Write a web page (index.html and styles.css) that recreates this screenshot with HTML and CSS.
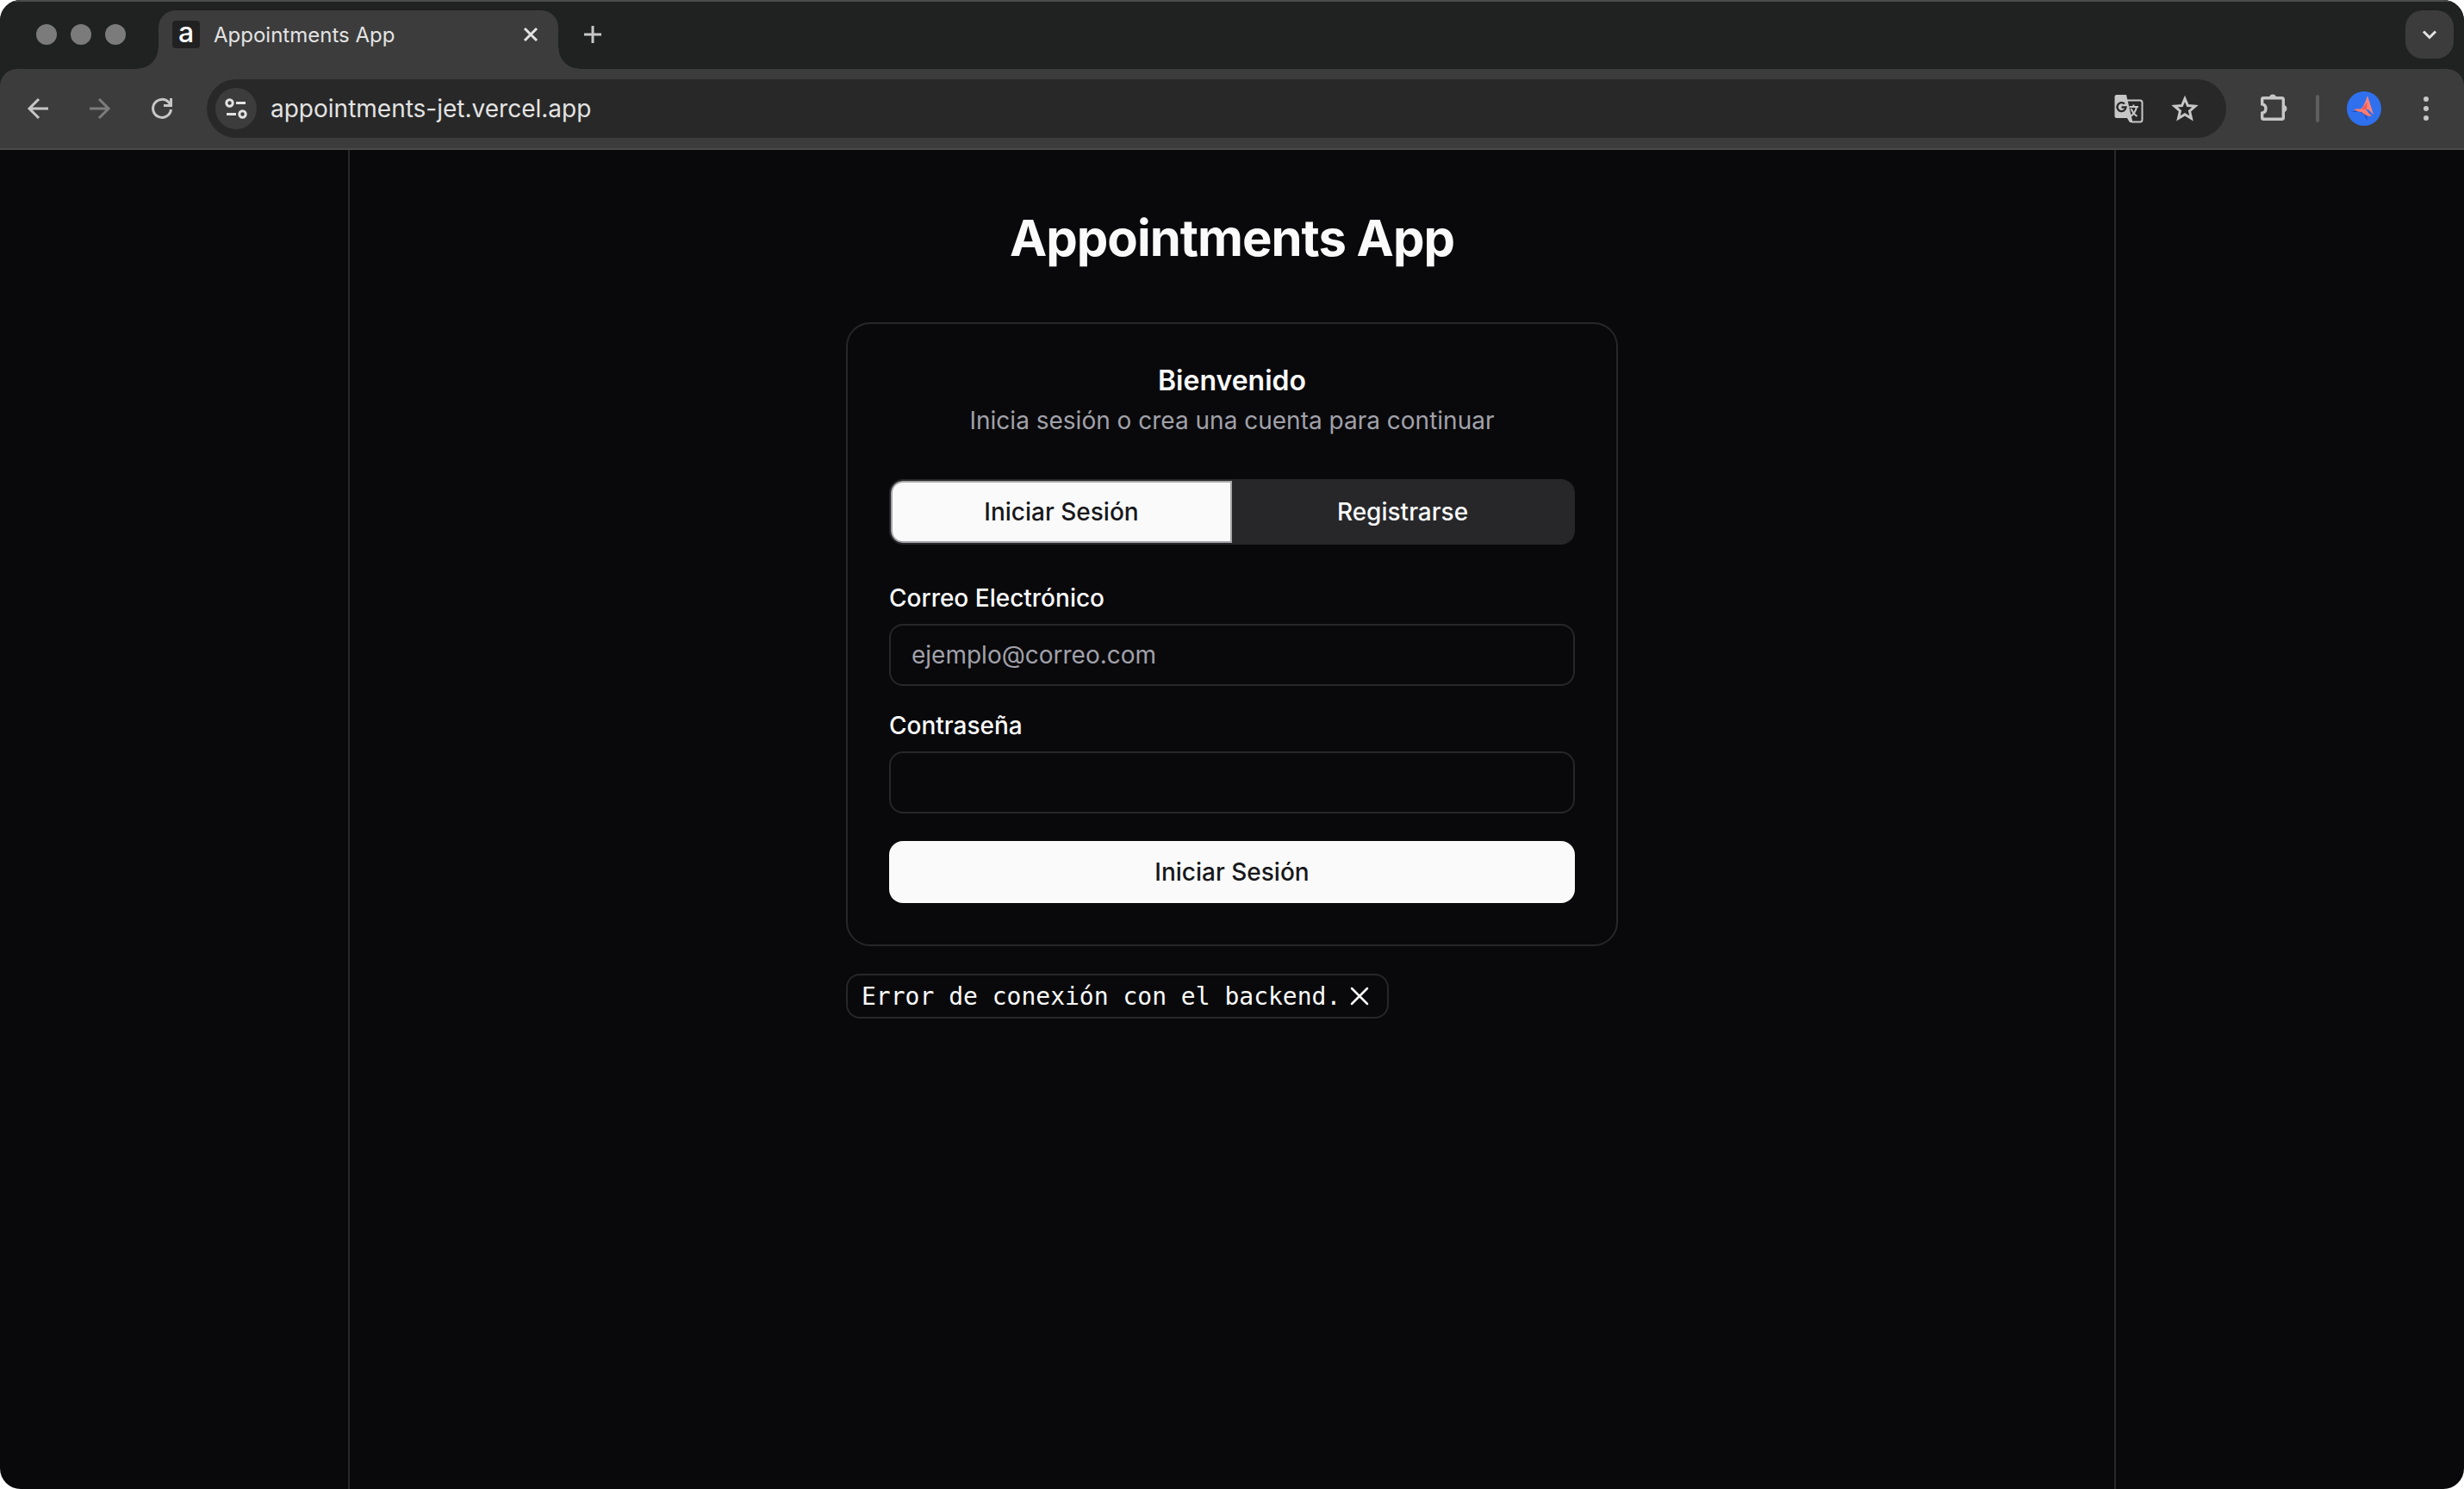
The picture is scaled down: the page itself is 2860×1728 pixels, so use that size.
FILE: index.html
```html
<!DOCTYPE html>
<html lang="es">
<head>
<meta charset="utf-8">
<title>Appointments App</title>
<link rel="stylesheet" href="styles.css">
</head>
<body>
<div class="window">
  <div class="chrome">
    <header class="tabstrip">
      <div class="lights"><span class="light"></span><span class="light"></span><span class="light"></span></div>
      <div class="tab">
        <span class="favicon">a</span>
        <span class="tab-title">Appointments App</span>
        <button class="icon-btn" aria-label="Cerrar pestaña">
          <svg width="24" height="24" viewBox="0 0 24 24"><path d="M5 5l14 14M19 5L5 19" fill="none" stroke="#e3e3e3" stroke-width="3"/></svg>
        </button>
      </div>
      <button class="icon-btn new-tab" aria-label="Nueva pestaña">
        <svg width="24" height="24" viewBox="0 0 24 24"><path d="M12 2v20M2 12h20" fill="none" stroke="#c7c7c7" stroke-width="3"/></svg>
      </button>
      <button class="icon-btn tab-search" aria-label="Buscar pestañas">
        <svg width="24" height="24" viewBox="0 0 24 24"><path d="M5 8.500l7 7 7-7" fill="none" stroke="#e3e3e3" stroke-width="3"/></svg>
      </button>
    </header>

    <nav class="toolbar">
      <button class="icon-btn" aria-label="Atrás">
        <svg width="32" height="32" viewBox="0 0 32 32"><path d="M28 16H6M17 5L6 16l11 11" fill="none" stroke="#c7c7c7" stroke-width="3"/></svg>
      </button>
      <button class="icon-btn" aria-label="Adelante">
        <svg width="32" height="32" viewBox="0 0 32 32"><path d="M4 16h22M15 5l11 11-11 11" fill="none" stroke="#7c7c7c" stroke-width="3"/></svg>
      </button>
      <button class="icon-btn" aria-label="Recargar">
        <svg width="32" height="32" viewBox="0 0 32 32"><path d="M26.500 17a10.500 10.500 0 1 1-2.500-8l2 2.500" fill="none" stroke="#c7c7c7" stroke-width="3"/><path d="M28 4v10H18v-3h7V4z" fill="#c7c7c7"/></svg>
      </button>
      <div class="omnibox">
        <button class="icon-btn site-info" aria-label="Información del sitio">
          <svg width="32" height="32" viewBox="0 0 32 32" fill="none" stroke="#e3e3e3" stroke-width="3"><circle cx="8.500" cy="9.500" r="3.700"/><path d="M16 9.500h11M5 22.500h11"/><circle cx="23.500" cy="22.500" r="3.700"/></svg>
        </button>
        <input class="url" type="text" value="appointments-jet.vercel.app" aria-label="Dirección">
        <button class="icon-btn" aria-label="Traducir">
          <svg width="34" height="34" viewBox="0 0 34 34"><path d="M15 7.500h15a2.500 2.500 0 0 1 2.500 2.500v20a2.500 2.500 0 0 1-2.500 2.500H20" fill="none" stroke="#c7c7c7" stroke-width="2"/><path d="M3 1h11l7.500 32H18l-3-5H3a2.500 2.500 0 0 1-2.500-2.500v-22A2.500 2.500 0 0 1 3 1z" fill="#c7c7c7"/><path d="M12 11.500a5 5 0 1 0 1.500 4H8.500" fill="none" stroke="#282828" stroke-width="2.400"/><path d="M17.500 15H28M22.500 12.500V15M26 15c-1 5-4 9-7 11M19.500 17c1.500 4 4 7 7 9" fill="none" stroke="#c7c7c7" stroke-width="2"/></svg>
        </button>
        <button class="icon-btn" aria-label="Añadir a marcadores">
          <svg width="32" height="32" viewBox="0 0 32 32"><path d="M16 4.500l3.400 8 8.600.7-6.500 5.700 2 8.500-7.500-4.600-7.500 4.600 2-8.500L4 13.200l8.600-.7z" fill="none" stroke="#c7c7c7" stroke-width="3"/></svg>
        </button>
      </div>
      <button class="icon-btn" aria-label="Extensiones">
        <svg width="36" height="36" viewBox="0 0 36 36"><path d="M7 5.700h22a1.300 1.300 0 0 1 1.300 1.300v22a1.300 1.300 0 0 1-1.300 1.300H7A1.300 1.300 0 0 1 5.700 29v-5.800a5.300 5.300 0 0 0 0-10.400V7A1.300 1.300 0 0 1 7 5.700z" fill="none" stroke="#c7c7c7" stroke-width="3.400"/><path d="M14 4.500a4.200 4.200 0 0 1 8 0zM31.500 14a4.200 4.200 0 0 1 0 8z" fill="#c7c7c7"/></svg>
      </button>
      <span class="divider"></span>
      <button class="icon-btn profile" aria-label="Perfil">
        <svg width="40" height="40" viewBox="0 0 40 40"><circle cx="20" cy="20" r="20" fill="#2f70ee"/><path d="M5 24l6-2 8 4 5 8-1-8 5 4-2-6z" fill="#2450bd"/><path d="M24 5l7 22-6-6-9 0c4-4 6-10 8-16z" fill="#ff8478"/><path d="M8 21c5-1 10-1 14 0l7 8c-5 0-9-2-12-5-3 0-6-1-9-3z" fill="#fb7b70"/><path d="M24 12l-1 9-6 0z" fill="#ef5a55"/></svg>
      </button>
      <button class="icon-btn" aria-label="Menú">
        <svg width="32" height="32" viewBox="0 0 32 32" fill="#c7c7c7"><circle cx="16" cy="5" r="3"/><circle cx="16" cy="16" r="3"/><circle cx="16" cy="27" r="3"/></svg>
      </button>
    </nav>
  </div>

  <main class="page">
    <div class="column">
      <h1 class="title">Appointments App</h1>
      <div class="stack">
        <section class="card">
          <h2 class="card-title">Bienvenido</h2>
          <p class="card-text">Inicia sesión o crea una cuenta para continuar</p>
          <div class="switch">
            <button class="switch-item active">Iniciar Sesión</button>
            <button class="switch-item">Registrarse</button>
          </div>
          <form class="form">
            <label class="label" for="email">Correo Electrónico</label>
            <input class="field" id="email" type="email" placeholder="ejemplo@correo.com">
            <label class="label" for="password">Contraseña</label>
            <input class="field" id="password" type="password">
            <button class="submit" type="button">Iniciar Sesión</button>
          </form>
        </section>
        <div class="toast" role="alert">
          <span>Error de conexión con el backend.</span>
          <button class="icon-btn" aria-label="Cerrar aviso">
            <svg width="32" height="32" viewBox="0 0 32 32"><path d="M7 7l18 18M25 7L7 25" fill="none" stroke="#fafafa" stroke-width="2.500" stroke-linecap="round"/></svg>
          </button>
        </div>
      </div>
    </div>
  </main>
</div>
</body>
</html>
```
FILE: styles.css
```css
* { box-sizing: border-box; }
body {
  margin: 0;
  background: #fff;
  color: #fafafa;
  font-family: Inter, "Liberation Sans", sans-serif;
  font-size: 28px;
}
button, input { font: inherit; color: inherit; }
svg { display: block; }

.window {
  display: flex;
  flex-direction: column;
  min-height: 100vh;
  border-radius: 24px;
  overflow: hidden;
  background: #09090b;
}
.chrome { background: #202221; }
.icon-btn {
  display: flex;
  flex: none;
  align-items: center;
  justify-content: center;
  padding: 0;
  border: 0;
  background: none;
}

/* Tab strip */
.tabstrip {
  display: flex;
  align-items: center;
  height: 80px;
  padding: 0 12px 0 42px;
  box-shadow: inset 0 2px #4b4d4c;
}
.lights { display: flex; gap: 16px; }
.light {
  width: 24px;
  height: 24px;
  border-radius: 50%;
  background: #7b7b7b;
}
.tab {
  position: relative;
  display: flex;
  align-self: flex-end;
  align-items: center;
  gap: 16px;
  width: 464px;
  height: 68px;
  margin-left: 38px;
  padding: 0 20px 12px 16px;
  border-radius: 20px 20px 0 0;
  background: #3c3c3c;
}
.tab::before, .tab::after {
  content: "";
  position: absolute;
  bottom: 0;
  width: 24px;
  height: 24px;
}
.tab::before {
  right: 100%;
  background: radial-gradient(circle at 0 0, transparent 23px, #3c3c3c 24px);
}
.tab::after {
  left: 100%;
  background: radial-gradient(circle at 100% 0, transparent 23px, #3c3c3c 24px);
}
.favicon {
  width: 32px;
  height: 32px;
  border-radius: 4px;
  background: #212121;
  color: #fff;
  font-size: 32px;
  font-weight: 500;
  line-height: 28px;
  text-align: center;
}
.tab-title {
  flex: 1;
  color: #e3e3e3;
  font-size: 24px;
}
.new-tab { margin-left: 28px; }
.tab-search {
  width: 56px;
  height: 56px;
  margin-left: auto;
  border-radius: 20px;
  background: #3c3c3c;
}

/* Toolbar */
.toolbar {
  display: flex;
  align-items: center;
  gap: 40px;
  height: 94px;
  padding: 0 28px;
  border-bottom: 2px solid #4a4a4a;
  border-radius: 20px 20px 0 0;
  background: #3c3c3c;
}
.omnibox {
  display: flex;
  flex: 1;
  align-items: center;
  gap: 32px;
  height: 68px;
  margin: 0 -4px;
  padding: 0 32px 0 10px;
  border-radius: 34px;
  background: #282828;
}
.site-info {
  width: 48px;
  height: 48px;
  border-radius: 50%;
  background: #3c3c3c;
}
.url {
  flex: 1;
  margin-left: -16px;
  padding: 0;
  border: 0;
  outline: 0;
  background: none;
  color: #e3e3e3;
}
.divider {
  width: 4px;
  height: 32px;
  margin: 0 -8px;
  border-radius: 2px;
  background: #5f5f5f;
}
.profile { margin-right: -4px; }

/* Page */
.page {
  flex: 1;
  display: flex;
  padding: 0 404px;
}
.column {
  flex: 1;
  padding: 72px 0 64px;
  border: solid #27272a;
  border-width: 0 2px;
}
.title {
  margin: 0;
  font-size: 58px;
  font-weight: 700;
  line-height: 60px;
  letter-spacing: -1px;
  text-align: center;
}
.stack {
  max-width: 896px;
  margin: 68px auto 0;
}
.card {
  padding: 48px;
  border: 2px solid #27272a;
  border-radius: 28px;
}
.card-title {
  margin: 0;
  font-size: 32px;
  font-weight: 600;
  line-height: 36px;
  text-align: center;
}
.card-text {
  margin: 8px 0 48px;
  color: #a1a1aa;
  line-height: 40px;
  text-align: center;
}
.switch {
  display: grid;
  grid-template-columns: 1fr 1fr;
  height: 76px;
  border: 2px solid #27272a;
  border-radius: 16px;
  overflow: hidden;
  background: #27272a;
}
.switch-item {
  border: 0;
  background: #27272a;
  font-weight: 500;
}
.active {
  border: 2px solid #a7a7a9;
  border-radius: 14px 0 0 14px;
  background: #fafafa;
  color: #18181b;
}
.form {
  display: flex;
  flex-direction: column;
  padding-top: 48px;
}
.label {
  margin-bottom: 16px;
  font-weight: 500;
  line-height: 28px;
}
.field {
  height: 72px;
  margin-bottom: 32px;
  padding: 0 24px;
  border: 2px solid #27272a;
  border-radius: 16px;
  outline: 0;
  background: none;
}
.field::placeholder { color: #a1a1aa; opacity: 1; }
.submit {
  height: 72px;
  border: 0;
  border-radius: 16px;
  background: #fafafa;
  color: #18181b;
  font-weight: 500;
}
.toast {
  display: flex;
  align-items: center;
  gap: 6px;
  width: fit-content;
  height: 52px;
  margin-top: 32px;
  padding: 0 16px;
  border: 2px solid #27272a;
  border-radius: 16px;
  font-family: "DejaVu Sans Mono", "Liberation Mono", monospace;
}
```
